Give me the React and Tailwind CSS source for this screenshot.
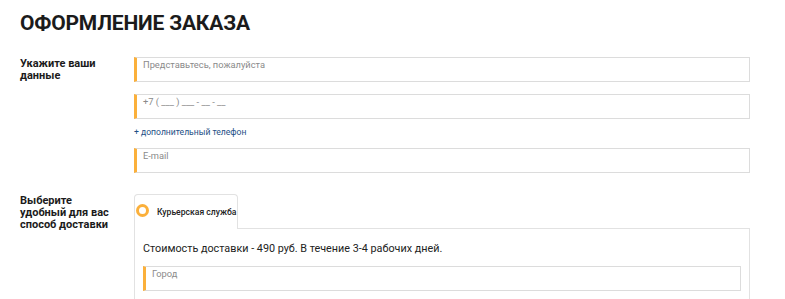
import React from "react";

function Field({ placeholder }) {
  return (
    <div className="h-[25px] border border-[#dcdcdc] border-l-[3px] border-l-[#fbb03b] bg-white pl-[6px] pt-[1px]">
      <div className="text-[9.3px] leading-[12px] text-[#8a8a8a]">{placeholder}</div>
    </div>
  );
}

export default function App() {
  return (
    <div className="min-h-screen bg-white pl-[20px] pt-[11px] font-['Roboto',sans-serif] text-[#1b1b1b]">
      <h1 className="text-[21px] font-bold leading-[24px] tracking-[-0.2px]">ОФОРМЛЕНИЕ ЗАКАЗА</h1>

      {/* Contacts */}
      <div className="mt-[22px] flex">
        <div className="w-[114px] pt-[1px] text-[11px] font-bold leading-[12px]">
          Укажите ваши
          <br />
          данные
        </div>
        <div className="w-[616px]">
          <Field placeholder="Представьтесь, пожалуйста" />
          <div className="mt-[12px]">
            <Field placeholder="+7 ( ___ ) ___ - __ - __" />
          </div>
          <div className="mt-[7px] text-[8.6px] leading-[12px] text-[#1d4f86]">+ дополнительный телефон</div>
          <div className="mt-[10px]">
            <Field placeholder="E-mail" />
          </div>
        </div>
      </div>

      {/* Delivery */}
      <div className="mt-[21px] flex">
        <div className="w-[114px] pt-[1px] text-[11px] font-bold leading-[12px]">
          Выберите
          <br />
          удобный для вас
          <br />
          способ доставки
        </div>
        <div className="w-[616px]">
          <div className="flex">
            <div className="relative flex h-[35px] items-center whitespace-nowrap rounded-t-[4px] border border-b-0 border-[#e2e2e2] bg-white pl-[22px] pr-[1px]">
              <span className="absolute left-[1px] top-[9px] h-[13px] w-[13px] rounded-full border-[3px] border-[#fbb03b] bg-white" />
              <span className="text-[8.6px] font-medium text-[#222]">Курьерская служба</span>
            </div>
            <div className="flex-1 border-b border-[#e2e2e2]" />
          </div>
          <div className="h-[80px] border-x border-[#e2e2e2] px-[8px] pt-[13px]">
            <div className="text-[10.8px] leading-[14px] text-[#222]">
              Стоимость доставки - 490 руб. В течение 3-4 рабочих дней.
            </div>
            <div className="mt-[10px]">
              <Field placeholder="Город" />
            </div>
          </div>
        </div>
      </div>
    </div>
  );
}
